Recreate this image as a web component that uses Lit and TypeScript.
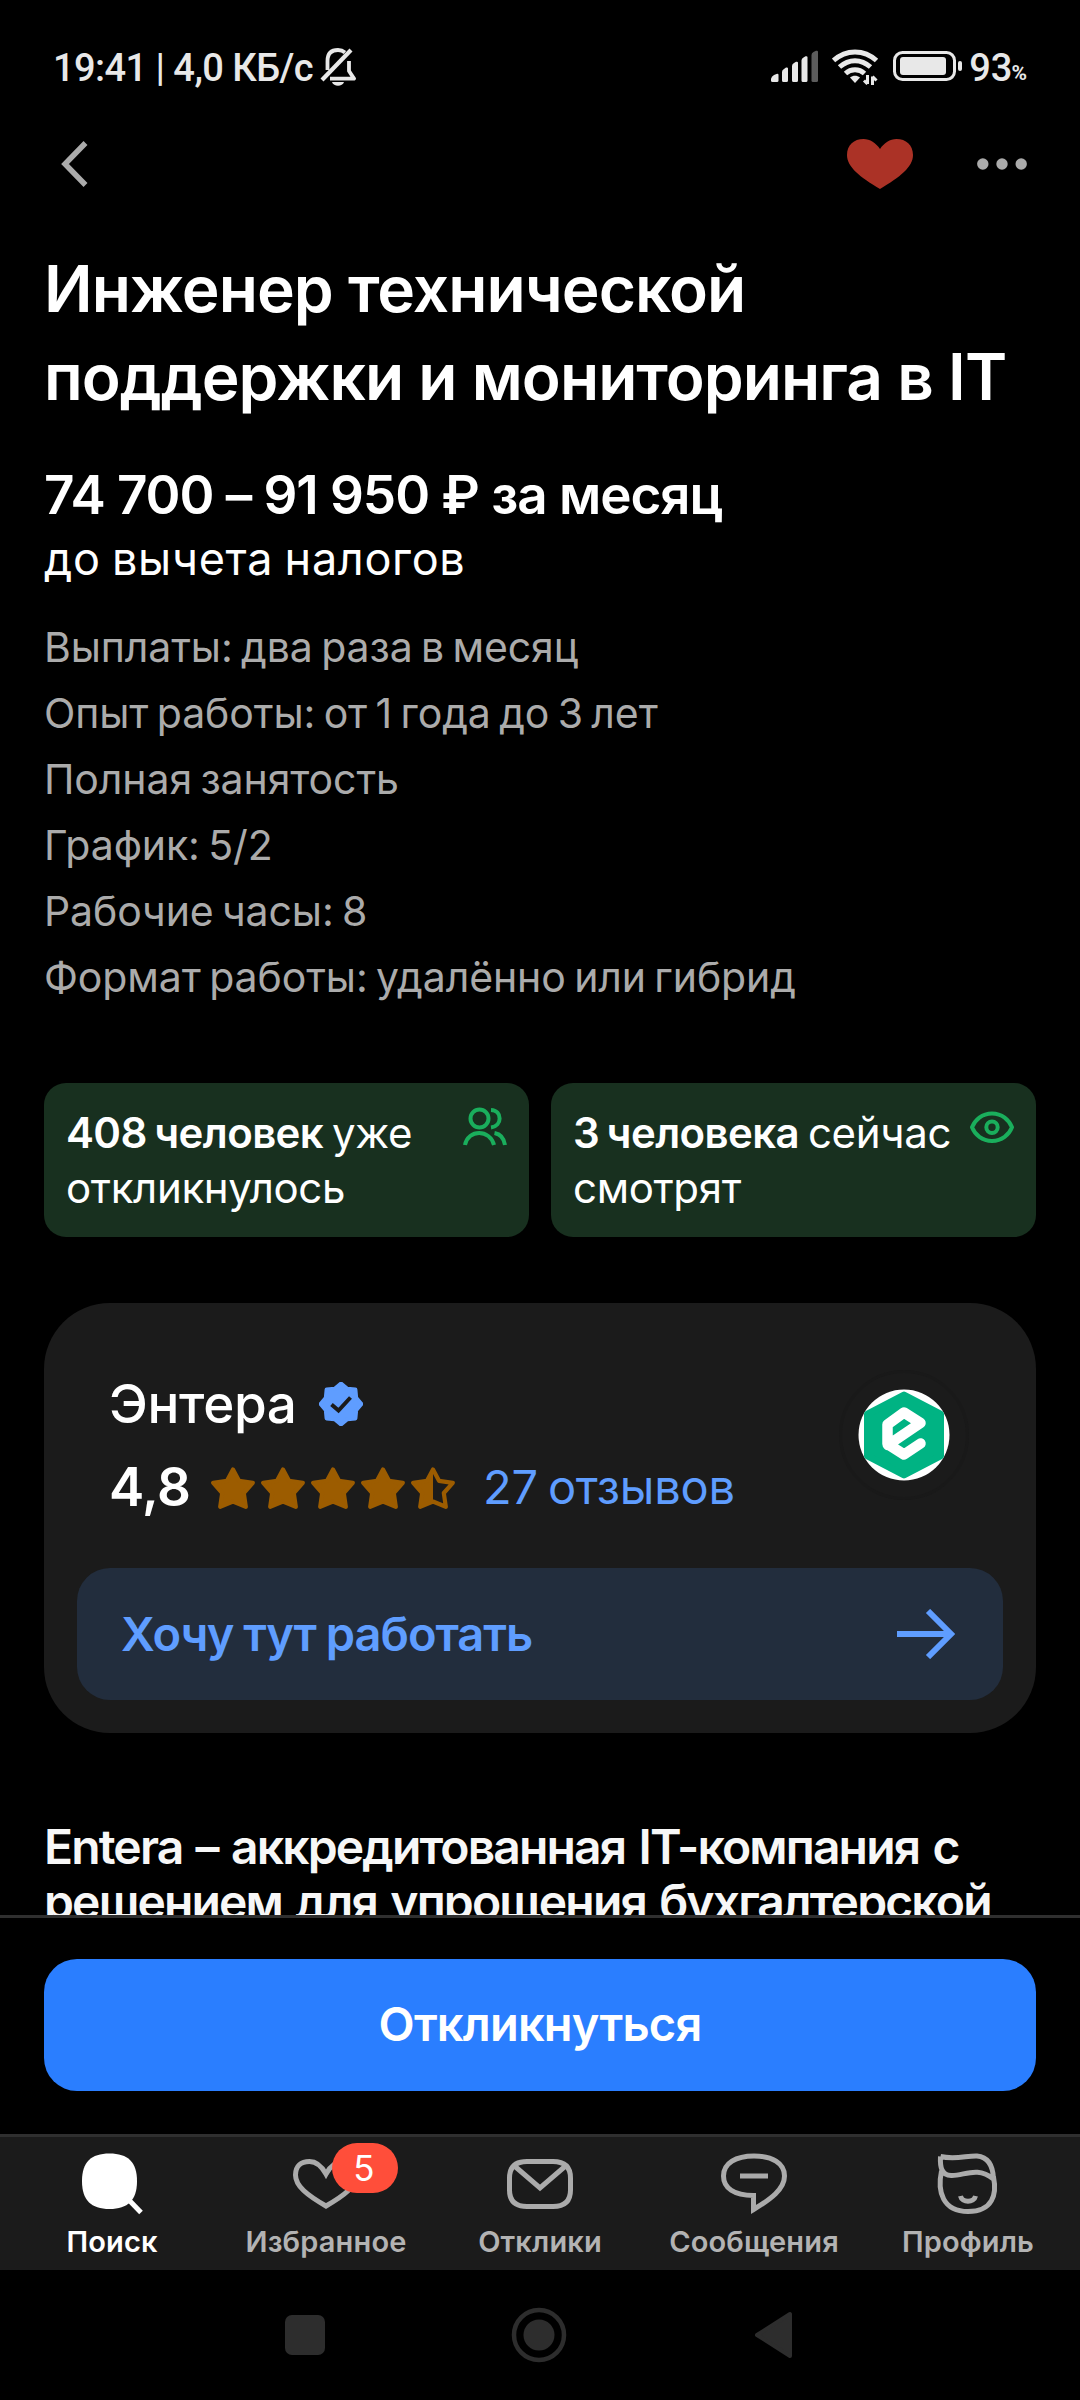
import { LitElement, html, css, svg } from "lit";
import { customElement } from "lit/decorators.js";

const STAR = "M22 2.5 28 13.8 41.800 15.8 32.8 26 34.8 39.8 22 34.5 9.2 39.8 11.2 26 2.200 15.8 16 13.8Z";
const HEART = "M33 50C13 38 0 28 0 16 0 6 7 0 16.5 0 23 0 29 4 33 10 37 4 43 0 49.5 0 59 0 66 6 66 16 66 28 53 38 33 50Z";

const seal = Array.from({ length: 16 }, (_, i) => {
  const r = i % 2 ? 16.4 : 20.4;
  const a = (i * Math.PI) / 8;
  return `${(22 + r * Math.sin(a)).toFixed(2)},${(22 - r * Math.cos(a)).toFixed(2)}`;
}).join(" ");

@customElement("status-bar")
export class StatusBar extends LitElement {
  static styles = css`
    :host {
      display: flex;
      height: 120px;
      padding: 0 53px 0 53px;
      box-sizing: border-box;
      color: #e8e8e8;
      font: 500 38px/44px Roboto, sans-serif;
    }
    .left, .right { display: flex; align-items: flex-start; padding-top: 46px; }
    .right { margin-left: auto; }
    .clock { letter-spacing: -0.55px; white-space: pre; }
    .bell { margin: 0 0 0 7px; }
    .signal { margin-right: 13px; }
    .wifi { margin-right: 14px; }
    .battery { margin-right: 6px; }
    .pct { font-size: 21px; line-height: 55px; font-weight: 700; margin-left: -1px; }
    svg { display: block; }
  `;
  render() {
    return html`
      <div class="left">
        <span class="clock">19:41 | 4,0 КБ/с</span>
        <svg class="bell" width="36" height="42" viewBox="0 0 36 42" fill="none">
          <path d="M7.5 24V15C7.5 7 12 4 18 4c3 0 5 .8 7 2.4M29 15v10l5 7.600H10" stroke="#e8e8e8" stroke-width="3.8" stroke-linejoin="round"/>
          <path d="M31 4 2 34" stroke="#e8e8e8" stroke-width="4.200"/>
          <path d="M12 36h12c-1.500 5-10.500 5-12 0Z" fill="#e8e8e8"/>
        </svg>
      </div>
      <div class="right">
        <svg class="signal" width="48" height="40" viewBox="0 0 48 40" fill="#e8e8e8">
          <path d="M0 32.500Q1 30 3 29l2.500-1q2-.6 2 1V34.500q0 1.500-1.500 1.500h-4.500Q0 36 0 34.500Z"/>
          <path d="M11 26q0-2 2-3l2-1.500q2-.5 2 1V34.500q0 1.500-1.500 1.500h-3Q11 36 11 34.500Z"/>
          <path d="M21 20q0-2 2-3l2-1.200q2-.5 2 1V34.500q0 1.500-1.500 1.500h-3Q21 36 21 34.500Z"/>
          <path d="M30.500 14.500q0-2 2-3l2-1.200q2-.5 2 1V34.500q0 1.500-1.500 1.500h-3Q30.500 36 30.500 34.500Z"/>
          <path fill="#5c5c5c" d="M40.500 9q0-2 2-3l2.500-1.200q2-.5 2 1V34.500q0 1.500-1.500 1.500h-3.500Q40.500 36 40.500 34.500Z"/>
        </svg>
        <svg class="wifi" width="47" height="42" viewBox="0 0 47 42" fill="none" stroke="#e8e8e8" stroke-width="5">
          <path d="M1.500 14.500C14 3 32 3 44.500 14.500"/>
          <path d="M7.500 21C17 12.500 29 12.500 38.500 21"/>
          <path d="M13.500 27.500C19 22.500 27 22.500 32.500 27.500"/>
          <path d="M18 31.500C21 29.300 25 29.300 28 31.500L23 37Z" fill="#e8e8e8" stroke="none"/>
          <path d="M35.500 29v9M32 34.500l3.500 3.500M40.500 39v-8.500M40.500 30.500l4 4" stroke-width="3"/>
        </svg>
        <svg class="battery" width="70" height="40" viewBox="0 0 70 40">
          <rect x="1.500" y="6.500" width="60" height="27" rx="8" fill="none" stroke="#e8e8e8" stroke-width="3"/>
          <rect x="7" y="11" width="46" height="18" rx="3" fill="#e8e8e8"/>
          <rect x="65" y="15" width="4" height="10" rx="2" fill="#e8e8e8"/>
        </svg>
        <span>93</span><span class="pct">%</span>
      </div>
    `;
  }
}

@customElement("vacancy-info")
export class VacancyInfo extends LitElement {
  static styles = css`
    :host { display: block; padding: 0 44px; color: #fff; }
    .title { margin: 0; font-size: 64px; line-height: 88px; font-weight: 600; white-space: nowrap; letter-spacing: -0.95px; }
    .title span { display: block; }
    .salary { margin-top: 41px; font-size: 53px; line-height: 66px; font-weight: 600; letter-spacing: -1.05px; white-space: nowrap; }
    .tax { margin-top: 3px; font-size: 45px; line-height: 56px; letter-spacing: 0.7px; word-spacing: -2px; }
    ul { list-style: none; margin: 27px 0 0; padding: 0; color: #ababab; font-size: 41px; line-height: 66px; letter-spacing: -0.1px; word-spacing: -3px; white-space: nowrap; }
  `;
  render() {
    const facts = [
      "Выплаты: два раза в месяц",
      "Опыт работы: от 1 года до 3 лет",
      "Полная занятость",
      "График: 5/2",
      "Рабочие часы: 8",
      "Формат работы: удалённо или гибрид",
    ];
    return html`
      <h1 class="title"><span>Инженер технической</span><span>поддержки и мониторинга в IT</span></h1>
      <div class="salary">74 700 – 91 950 ₽ за месяц</div>
      <div class="tax">до вычета налогов</div>
      <ul>${facts.map((f) => html`<li>${f}</li>`)}</ul>
    `;
  }
}

@customElement("activity-stats")
export class ActivityStats extends LitElement {
  static styles = css`
    :host { display: flex; gap: 22px; margin: 73px 44px 0; color: #fff; }
    .stat { flex: 1; display: flex; justify-content: space-between; height: 154px; box-sizing: border-box; padding: 22px; border-radius: 22px; background: #18301f; font-size: 42px; line-height: 55px; white-space: nowrap; letter-spacing: -0.35px; word-spacing: -2.5px; }
    b { font-weight: 600; letter-spacing: -0.6px; }
    svg { flex: none; display: block; }
  `;
  render() {
    return html`
      <div class="stat">
        <span><b>408 человек</b> уже<br />откликнулось</span>
        <svg width="44" height="44" viewBox="0 0 44 44" fill="none" stroke="#1aae5c" stroke-width="4">
          <circle cx="16.500" cy="13.500" r="9"/>
          <path d="M28 5C39.500 5.500 39.500 21 28 22.500"/>
          <path d="M2 40C5 24 27 24 31 40M31.500 28C37 29 41 33 42 40"/>
        </svg>
      </div>
      <div class="stat">
        <span><b>3 человека</b> сейчас<br />смотрят</span>
        <svg width="44" height="44" viewBox="0 0 44 44" fill="none" stroke="#1aae5c" stroke-width="4">
          <path d="M2 22.300C5 15 12 8.500 22 8.500s17 6.500 20 13.800c-3 7.500-10 13.700-20 13.700S5 29.800 2 22.300Z" stroke-linejoin="round"/>
          <circle cx="22" cy="22.300" r="5.700"/>
        </svg>
      </div>
    `;
  }
}

@customElement("company-card")
export class CompanyCard extends LitElement {
  static styles = css`
    :host { display: block; margin: 66px 44px 0; padding: 67px 33px 33px; height: 430px; box-sizing: border-box; border-radius: 66px; background: #1b1b1b; color: #fff; }
    .head { display: flex; justify-content: space-between; padding: 0 34px 0 32px; height: 149px; }
    .about { padding-top: 1px; }
    .row { display: flex; align-items: center; height: 66px; white-space: nowrap; }
    .rating { margin-top: 17px; }
    .name { font-size: 53px; line-height: 66px; font-weight: 550; letter-spacing: -0.35px; }
    .seal { margin-left: 22px; }
    .score { font-size: 53px; line-height: 66px; font-weight: 600; width: 102px; letter-spacing: -0.5px; }
    .stars { display: flex; gap: 6px; width: 272px; padding-top: 3px; }
    .reviews { font-size: 47px; line-height: 66px; color: #5f9dff; letter-spacing: -0.2px; word-spacing: -3px; }
    .logo { width: 130px; height: 130px; box-sizing: border-box; border: 3px solid #191919; border-radius: 50%; display: flex; align-items: center; justify-content: center; }
    .want { display: flex; align-items: center; justify-content: space-between; margin-top: 49px; height: 132px; box-sizing: border-box; padding: 0 48px 0 44px; border-radius: 33px; background: #222d3d; color: #5f9dff; font-size: 47px; font-weight: 600; letter-spacing: -1px; word-spacing: -1px; }
    .want span { padding-bottom: 2px; }
    svg { display: block; flex: none; }
  `;
  render() {
    const star = (half: boolean) => html`
      <svg width="44" height="43" viewBox="0 0 44 43">
        ${half
          ? svg`<path d="M22 2.5V34.500L9.200 39.800 11.200 26 2.200 15.800 16 13.800Z" fill="#9c5c00"/>
              <path d=${STAR} fill="none" stroke="#9c5c00" stroke-width="4.200" stroke-linejoin="round"/>`
          : svg`<path d=${STAR} fill="#9c5c00" stroke="#9c5c00" stroke-width="4.200" stroke-linejoin="round"/>`}
      </svg>`;
    return html`
      <div class="head">
        <div class="about">
          <div class="row">
            <span class="name">Энтера</span>
            <svg class="seal" width="44" height="44" viewBox="0 0 44 44">
              <polygon points=${seal} fill="#5f9dff" stroke="#5f9dff" stroke-width="4" stroke-linejoin="round"/>
              <path d="M12.500 22.500 19.500 28.500 31.500 15.500" fill="none" stroke="#1b1b1b" stroke-width="4"/>
            </svg>
          </div>
          <div class="row rating">
            <span class="score">4,8</span>
            <span class="stars">${[0, 0, 0, 0, 1].map((h) => star(!!h))}</span>
            <span class="reviews">27 отзывов</span>
          </div>
        </div>
        <div class="logo">
          <svg width="92" height="92" viewBox="0 0 92 92">
            <circle cx="46" cy="46" r="45.500" fill="#fff"/>
            <path d="M46 6 82.500 25V67L46 86 9.500 67V25Z" fill="#00b383" stroke="#00b383" stroke-width="7" stroke-linejoin="round"/>
            <path d="M62.500 54.500 46 65.500 29.500 55V35.500L46 23.500 62.500 34 30 56" fill="none" stroke="#fff" stroke-width="10.500" stroke-linejoin="round" stroke-linecap="round"/>
          </svg>
        </div>
      </div>
      <div class="want">
        <span>Хочу тут работать</span>
        <svg width="58" height="50" viewBox="0 0 58 50" fill="none" stroke="#5f9dff" stroke-width="6">
          <path d="M0 25H53M31 2 54 25 31 48"/>
        </svg>
      </div>
    `;
  }
}

@customElement("bottom-nav")
export class BottomNav extends LitElement {
  static styles = css`
    :host { display: flex; height: 136px; box-sizing: border-box; border-top: 3px solid #2f2f2f; background: #1b1b1b; padding: 0 5px; color: #b3b3b3; }
    .tab { flex: 1; display: flex; flex-direction: column; align-items: center; padding-top: 13px; position: relative; font-size: 29px; line-height: 36px; font-weight: 600; letter-spacing: 0.15px; }
    .tab svg { display: block; margin-bottom: 8px; }
    .on { color: #fff; }
    .badge { position: absolute; left: 113px; top: 6px; width: 66px; height: 50px; border-radius: 25px; background: #ff4e3a; color: #fff; font-size: 35px; line-height: 50px; font-weight: 400; letter-spacing: 0; text-align: center; text-indent: -2px; }
  `;
  render() {
    const a = "#ababab";
    return html`
      <div class="tab on">
        <svg width="66" height="66" viewBox="0 0 66 66">
          <path d="M30.500 3.500C49 3.500 58 12 58 31 58 50 49 59 30.500 59 12 59 3 50 3 31 3 12 12 3.500 30.500 3.500Z" fill="#fff"/>
          <path d="M48 48 62 62.500" stroke="#fff" stroke-width="5"/>
        </svg>
        <span>Поиск</span>
      </div>
      <div class="tab">
        <svg width="66" height="66" viewBox="0 0 66 66" fill="none" stroke=${a} stroke-width="5">
          <path d="M33 56C14 45 2.500 36 2.500 25 2.500 16 8 11.500 16.500 11.500 23 11.500 28 15 33 24 38 15 43 11.500 49.500 11.500 58 11.500 63.500 16 63.500 25 63.500 36 52 45 33 56Z"/>
        </svg>
        <span>Избранное</span><span class="badge">5</span>
      </div>
      <div class="tab">
        <svg width="66" height="66" viewBox="0 0 66 66" fill="none" stroke=${a} stroke-width="5">
          <path d="M20 11.500H46C58 11.500 63.500 17 63.500 28V40C63.500 51 58 56.500 46 56.500H20C8 56.500 2.500 51 2.500 40V28C2.500 17 8 11.500 20 11.500ZM7.500 16 33 38 58.500 16"/>
        </svg>
        <span>Отклики</span>
      </div>
      <div class="tab">
        <svg width="66" height="66" viewBox="0 0 66 66" fill="none" stroke=${a} stroke-width="5">
          <path d="M33 6C51 6 63.500 13 63.500 26 63.500 39 50 49 32.500 59.500V45.500C13 45.500 2.500 38 2.500 26 2.500 13 15 6 33 6ZM19 26H47"/>
        </svg>
        <span>Сообщения</span>
      </div>
      <div class="tab">
        <svg width="66" height="66" viewBox="0 0 66 66" fill="none" stroke=${a} stroke-width="5">
          <path d="M5.500 6.500C20 10 32 5.500 42 6 53 7 58 16 58.500 29M5.500 6.500C5 16 6 26 17 25.500 30 25.500 42 16 58.500 29M6.500 21C2 42 8 61.500 33 61.500 58 61.500 62 44 58.500 27M25.500 46C27 53 39 53 40.500 46"/>
        </svg>
        <span>Профиль</span>
      </div>
    `;
  }
}

@customElement("app-root")
export class AppRoot extends LitElement {
  static styles = css`
    :host { display: flex; flex-direction: column; width: 1080px; height: 2400px; overflow: hidden; background: #000; font-family: Inter, "Noto Sans", sans-serif; }
    .bar { display: flex; align-items: center; justify-content: space-between; height: 88px; box-sizing: border-box; padding: 0 53px 0 61px; }
    .actions { display: flex; align-items: center; gap: 64px; }
    .content { flex: 1; min-height: 0; overflow: hidden; padding-top: 37px; }
    .about { margin: 86px 44px 0; color: #f7f7f7; font-size: 48px; line-height: 55px; font-weight: 600; white-space: nowrap; letter-spacing: -1.85px; word-spacing: 3px; }
    .about span { display: block; }
    .apply { border-top: 3px solid #2f2f2f; padding: 41px 44px 43px; }
    .button { display: block; width: 100%; height: 132px; border: 0; border-radius: 33px; background: #2a7eff; color: #fff; font: 600 47px/130px Inter, sans-serif; letter-spacing: -0.8px; padding: 0 0 2px; }
    .system { display: flex; align-items: center; height: 130px; padding-left: 285px; }
    .home { margin: 0 188px 0 186px; }
    svg { display: block; flex: none; }
  `;
  render() {
    return html`
      <status-bar></status-bar>
      <div class="bar">
        <svg width="28" height="46" viewBox="0 0 28 46" fill="none" stroke="#ababab" stroke-width="5.500"><path d="M24.500 2 4 23 24.500 44"/></svg>
        <div class="actions">
          <svg width="66" height="50" viewBox="0 0 66 50"><path d=${HEART} fill="#ab3226"/></svg>
          <svg width="50" height="12" viewBox="0 0 50 12" fill="#ababab"><circle cx="5.800" cy="6" r="5.700"/><circle cx="25" cy="6" r="5.700"/><circle cx="44.200" cy="6" r="5.700"/></svg>
        </div>
      </div>
      <div class="content">
        <vacancy-info></vacancy-info>
        <activity-stats></activity-stats>
        <company-card></company-card>
        <div class="about"><span>Entera – аккредитованная IT-компания с</span><span>решением для упрощения бухгалтерской</span></div>
      </div>
      <div class="apply"><button class="button">Откликнуться</button></div>
      <bottom-nav></bottom-nav>
      <div class="system">
        <svg width="40" height="40" viewBox="0 0 40 40"><rect width="40" height="40" rx="7" fill="#2d2d2d"/></svg>
        <svg class="home" width="56" height="56" viewBox="0 0 56 56"><circle cx="28" cy="28" r="25" fill="none" stroke="#2d2d2d" stroke-width="4.500"/><circle cx="28" cy="28" r="15.500" fill="#2d2d2d"/></svg>
        <svg width="38" height="48" viewBox="0 0 38 48"><path d="M2 24 35 3V45Z" fill="#2d2d2d" stroke="#2d2d2d" stroke-width="4" stroke-linejoin="round"/></svg>
      </div>
    `;
  }
}
